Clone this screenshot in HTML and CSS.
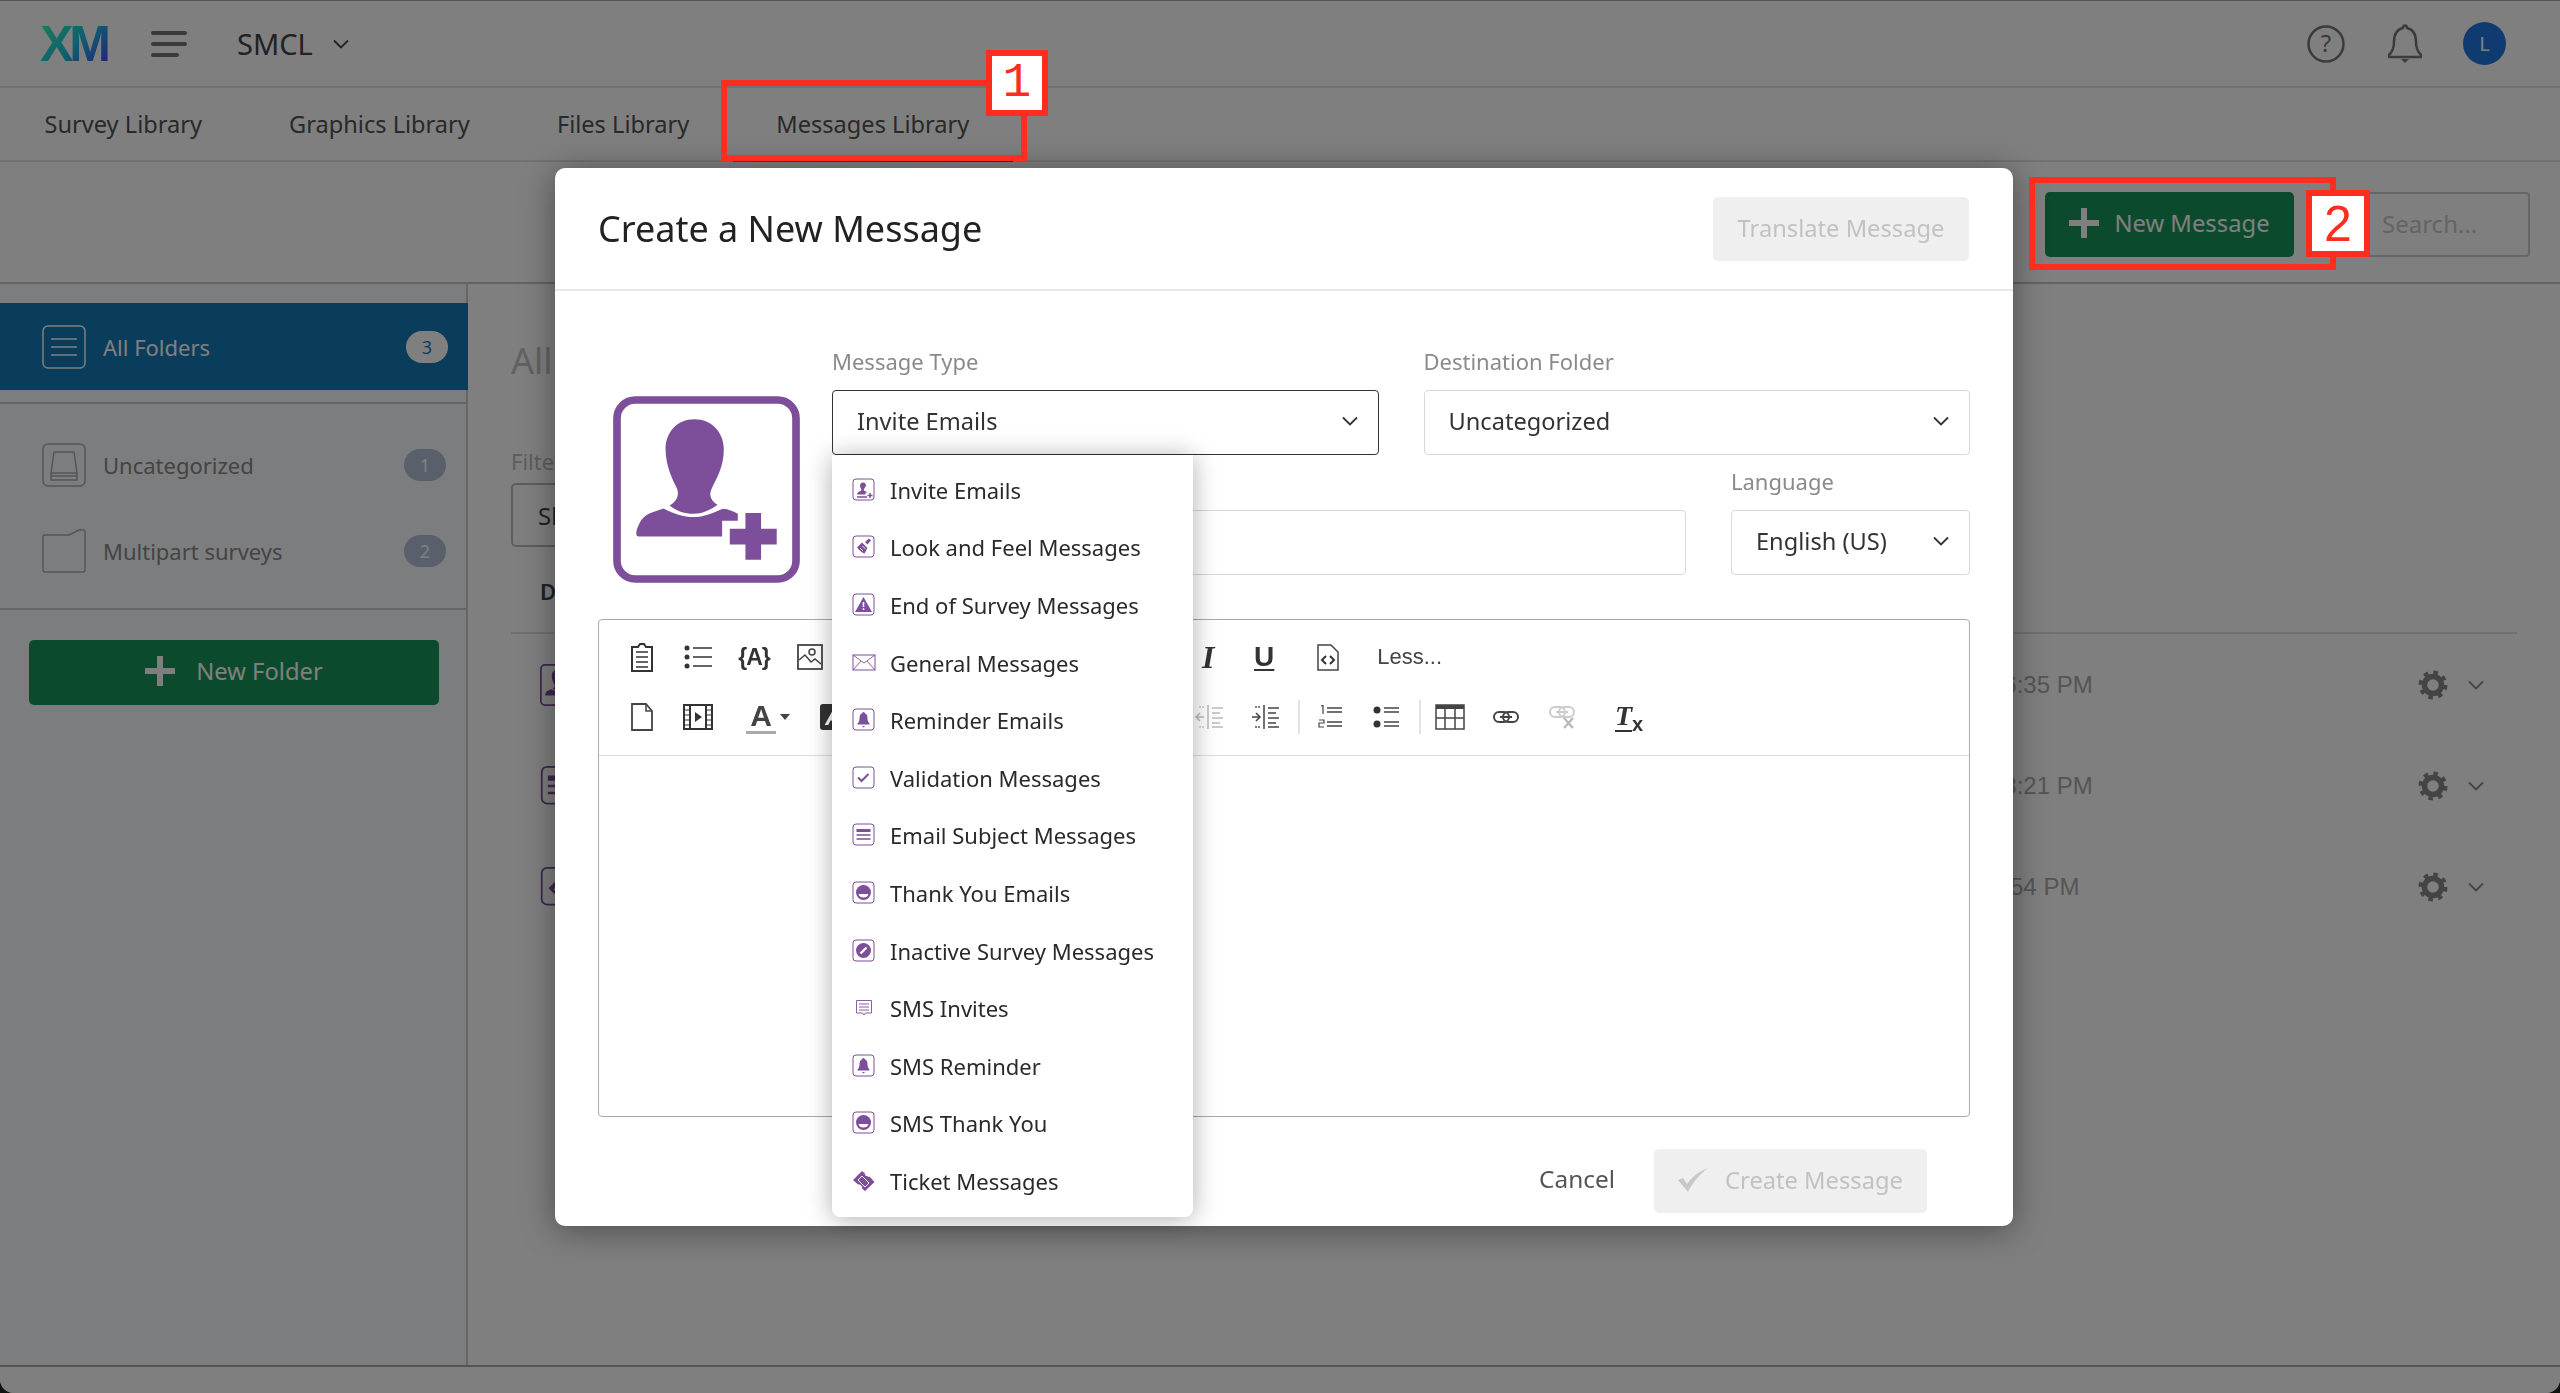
FILE: index.html
```html
<!DOCTYPE html>
<html lang="en">
<head>
<meta charset="utf-8">
<title>Create a New Message</title>
<link rel="stylesheet" href="styles.css">
</head>
<body>
<svg class="defs" aria-hidden="true">
  <symbol id="m-invite" viewBox="0 0 24 24"><rect x="1" y="1" width="21" height="21" rx="3" fill="#fff" stroke="#7d4e99"/><path d="M11 4.500c-2 0-3 1.500-3 3 0 2 1 3 1.400 4 .2.700-.4 1.200-1 1.500-1.500.5-3 1-3.400 3.500h8.500v-2h2c-.5-1-2.500-1.200-3.600-2-.3-.5 0-1 .4-2 .4-1 1.700-2 1.700-3 0-1.500-1-3-3-3z" fill="#7d4e99"/><path d="M5 19h10M18 15v5M15.500 17.500h5" stroke="#7d4e99" stroke-width="1.500" fill="none"/></symbol>
  <symbol id="m-brush" viewBox="0 0 24 24"><rect x="1" y="1" width="21" height="21" rx="3" fill="#fff" stroke="#7d4e99"/><path d="M13 7l4-3.500 2 2-3.500 4z" fill="#7d4e99"/><path d="M10 7.500l5.500 5.500-3 5.500c-2-.5-6-4-7.500-6z" fill="#7d4e99"/><path d="M8 13l3 3M10.500 11l3 3" stroke="#fff" stroke-width=".8"/></symbol>
  <symbol id="m-warn" viewBox="0 0 24 24"><rect x="1" y="1" width="21" height="21" rx="3" fill="#fff" stroke="#7d4e99"/><path d="M11.500 4L20 19H3z" fill="#7d4e99"/><path d="M11.500 9v5M11.500 15.300v1.700" stroke="#fff" stroke-width="1.600"/></symbol>
  <symbol id="m-mail" viewBox="0 0 24 24"><rect x="1" y="4" width="22" height="15" fill="#fff" stroke="#7d4e99"/><path d="M1 4l11 8 11-8M1 19l8-9M23 19l-8-9" fill="none" stroke="#7d4e99" stroke-width=".9"/></symbol>
  <symbol id="m-bell" viewBox="0 0 24 24"><rect x="1" y="1" width="21" height="21" rx="3" fill="#fff" stroke="#7d4e99"/><path d="M11.500 4c-1 0-1.300.8-1.300 1.300C8 6 7.500 8 7.500 10.500c0 2.500-1 4-2 5v1h12v-1c-1-1-2-2.500-2-5 0-2.500-.5-4.500-2.700-5.200 0-.5-.3-1.300-1.300-1.300z" fill="#7d4e99"/><path d="M10 18h3l-1.500 1.500z" fill="#7d4e99"/></symbol>
  <symbol id="m-check" viewBox="0 0 24 24"><rect x="1" y="1" width="21" height="21" rx="3" fill="#fff" stroke="#7d4e99"/><path d="M6 11.500l3.500 3.500 7-7" fill="none" stroke="#7d4e99" stroke-width="2"/></symbol>
  <symbol id="m-subject" viewBox="0 0 24 24"><rect x="1" y="1" width="21" height="21" rx="3" fill="#fff" stroke="#7d4e99"/><path d="M4.500 6h14v3h-14z" fill="#7d4e99"/><path d="M4.500 12h14M4.500 16h14" stroke="#7d4e99" stroke-width="1.300"/></symbol>
  <symbol id="m-thank" viewBox="0 0 24 24"><rect x="1" y="1" width="21" height="21" rx="3" fill="#fff" stroke="#7d4e99"/><circle cx="11.500" cy="11.500" r="7.500" fill="#7d4e99"/><path d="M6.500 13h10c-.5 2.500-2.500 3.500-5 3.500s-4.500-1-5-3.500z" fill="#fff"/></symbol>
  <symbol id="m-inactive" viewBox="0 0 24 24"><rect x="1" y="1" width="21" height="21" rx="3" fill="#fff" stroke="#7d4e99"/><circle cx="11.500" cy="11.500" r="7.500" fill="#7d4e99"/><path d="M8.500 14.500l6-6" stroke="#fff" stroke-width="2.400"/></symbol>
  <symbol id="m-sms" viewBox="0 0 24 24"><path d="M4.500 4.500h15v12.500h-6l-1.500 2-1.500-2h-6z" fill="#fff" stroke="#7d4e99" stroke-width=".9"/><path d="M7 8h10M7 11h10M7 14h10" stroke="#7d4e99" stroke-width=".9"/></symbol>
  <symbol id="m-ticket" viewBox="0 0 24 24"><path d="M1 11l9-9 3 2.500c-.5 1 0 2 1.500 2.500s2 1 3 .5l5 5.500-9.500 9-3-2.500c.5-1.500 0-2.500-1-3s-2-1.500-3-1z" fill="#7d4e99"/><path d="M6 11l4-4 7 7-4 4z" fill="none" stroke="#fff" stroke-width="1"/></symbol>
  <symbol id="big" viewBox="158 108 562 562">
    <rect x="170" y="120" width="538" height="538" rx="55" fill="#fff" stroke="#7d4e99" stroke-width="23"/>
    <path d="M403 178C350 178 316 218 316 268C316 320 340 365 350 385C358 405 350 425 328 437C350 455 375 462 400 462C425 462 450 452 472 435C452 422 445 405 455 385C470 355 491 320 491 268C491 218 455 178 403 178Z" fill="#7d4e99"/>
    <path d="M310 446C280 456 250 462 238 490C230 505 228 515 228 522Q228 530 236 530L486 530L486 483L533 483L533 462C520 455 505 448 488 447C460 460 430 472 400 472C370 472 340 462 310 446Z" fill="#7d4e99"/>
    <path d="M556 460h47v47h47v47h-47v46h-47v-46h-47v-47h47z" fill="#7d4e99"/>
  </symbol>
  <symbol id="plus" viewBox="0 0 30 30"><path d="M12 0h6v12h12v6H18v12h-6V18H0v-6h12z" fill="currentColor"/></symbol>
  <symbol id="chev" viewBox="0 0 16 10"><path d="M1 1.500l7 7 7-7" fill="none" stroke="currentColor" stroke-width="1.800"/></symbol>
  <symbol id="gear" viewBox="0 0 30 30"><circle cx="15" cy="15" r="8.500" fill="none" stroke="#888" stroke-width="5.500"/><circle cx="15" cy="15" r="12.500" fill="none" stroke="#888" stroke-width="4" stroke-dasharray="4.500 5.320"/></symbol>
</svg>

<div class="page">
  <header class="topbar">
    <span class="logo">XM</span>
    <span class="burger"><i></i><i></i><i class="short"></i></span>
    <span class="org">SMCL</span>
    <svg class="org-chev"><use href="#chev"/></svg>
    <span class="top-right">
      <svg class="help" viewBox="0 0 38 38"><circle cx="19" cy="19" r="17.500" fill="none" stroke="#777" stroke-width="2.500"/><text x="19" y="27" text-anchor="middle" class="help-q">?</text></svg>
      <svg class="bell" viewBox="0 0 34 40"><path d="M17 1.500c-1.500 0-2 1.500-2 2.500C8 5.500 6 11 6 18c0 7-2 10-5 13v2h32v-2c-3-3-5-6-5-13 0-7-2-12.500-9-14 0-1-.5-2.500-2-2.500z" fill="none" stroke="#777" stroke-width="2.500"/><path d="M13 35h8l-4 4z" fill="#777"/></svg>
      <span class="avatar">L</span>
    </span>
  </header>

  <nav class="tabs">
    <a class="tab">Survey Library</a>
    <a class="tab">Graphics Library</a>
    <a class="tab">Files Library</a>
    <a class="tab active">Messages Library</a>
  </nav>

  <div class="actions">
    <button class="btn-green new-msg"><svg class="plus"><use href="#plus"/></svg>New Message</button>
    <div class="search">Search...</div>
  </div>

  <div class="content">
    <aside class="sidebar">
      <div class="side-group first">
        <div class="folder selected">
          <svg class="folder-ico" viewBox="0 0 44 44"><rect x="1" y="1" width="42" height="42" rx="5" fill="none" stroke="#fff" stroke-width="1.500"/><path d="M9 14h26M9 22h26M9 30h26" stroke="#fff" stroke-width="1.500"/></svg>
          <span class="folder-name">All Folders</span><span class="badge light">3</span>
        </div>
      </div>
      <div class="side-group">
        <div class="folder">
          <svg class="folder-ico" viewBox="0 0 44 44"><rect x="1" y="1" width="42" height="42" rx="5" fill="none" stroke="#aaa" stroke-width="1.500"/><path d="M12 9h20l3 21H9zM9 30v7h26v-7M9 33h26" fill="none" stroke="#aaa" stroke-width="1.500"/></svg>
          <span class="folder-name">Uncategorized</span><span class="badge">1</span>
        </div>
        <div class="folder">
          <svg class="folder-ico" viewBox="0 0 44 44"><path d="M1 8q0-2 2-2h24l10-5h5q1 0 1 2v38q0 2-2 2H3q-2 0-2-2z" fill="none" stroke="#aaa" stroke-width="1.500"/></svg>
          <span class="folder-name">Multipart surveys</span><span class="badge">2</span>
        </div>
      </div>
      <div class="side-foot">
        <button class="btn-green new-folder"><svg class="plus"><use href="#plus"/></svg>New Folder</button>
      </div>
    </aside>
    <main class="main">
      <h2 class="main-title">All Folders</h2>
      <div class="filter-label">Filter by</div>
      <div class="filter-select">Show All</div>
      <div class="list-head">Description</div>
      <div class="row"><svg class="row-ico"><use href="#big"/></svg><span class="row-time">16:35 PM</span><svg class="gear"><use href="#gear"/></svg><svg class="row-chev"><use href="#chev"/></svg></div>
      <div class="row"><svg class="row-ico"><use href="#m-subject"/></svg><span class="row-time">18:21 PM</span><svg class="gear"><use href="#gear"/></svg><svg class="row-chev"><use href="#chev"/></svg></div>
      <div class="row"><svg class="row-ico"><use href="#m-brush"/></svg><span class="row-time">9:54 PM</span><svg class="gear"><use href="#gear"/></svg><svg class="row-chev"><use href="#chev"/></svg></div>
    </main>
  </div>
  <footer class="pagefoot"></footer>
</div>

<div class="overlay"></div>

<section class="modal">
  <div class="modal-head">
    <h1 class="modal-title">Create a New Message</h1>
    <button class="btn-off translate">Translate Message</button>
  </div>
  <div class="modal-body">
    <div class="form">
      <div class="big-ico-wrap">
        <svg class="big-ico"><use href="#big"/></svg>
      </div>
      <div class="fields">
        <div class="field-row">
          <div class="field grow"><label class="lbl">Message Type</label><div class="select open">Invite Emails<svg class="sel-chev"><use href="#chev"/></svg></div></div>
          <div class="field grow"><label class="lbl">Destination Folder</label><div class="select">Uncategorized<svg class="sel-chev"><use href="#chev"/></svg></div></div>
        </div>
        <div class="field-row second">
          <div class="field grow"><label class="lbl">Message Name</label><div class="select"></div></div>
          <div class="field lang"><label class="lbl">Language</label><div class="select">English (US)<svg class="sel-chev"><use href="#chev"/></svg></div></div>
        </div>
      </div>
    </div>

    <div class="editor">
      <div class="toolbar">
        <div class="tb-row">
          <span class="tb"><svg width="24" height="30" viewBox="0 0 24 30"><path d="M2 5h6l2-3h4l2 3h6v24H2z" fill="none" stroke="#333" stroke-width="2"/><path d="M6 10h12M6 15h12M6 20h12M6 25h12" stroke="#333" stroke-width="1.500"/></svg></span>
          <span class="tb"><svg width="28" height="24" viewBox="0 0 28 24"><circle cx="3" cy="3" r="2.500" fill="#333"/><circle cx="3" cy="12" r="2.500" fill="#333"/><circle cx="3" cy="21" r="2.500" fill="#333"/><path d="M9 3h19M9 12h19M9 21h19" stroke="#333" stroke-width="1.500"/></svg></span>
          <span class="tb glyph-b">{A}</span>
          <span class="tb"><svg width="26" height="26" viewBox="0 0 26 26"><rect x="1" y="1" width="24" height="24" fill="none" stroke="#444" stroke-width="1.800"/><circle cx="15" cy="8" r="3" fill="none" stroke="#444" stroke-width="1.500"/><path d="M2 16l6-5 6 7 4-3 6 5" fill="none" stroke="#444" stroke-width="1.500"/></svg></span>
          <span class="tb-gap"></span>
          <span class="tb glyph-i">I</span>
          <span class="tb glyph-u">U</span>
          <span class="tb code-btn"><svg width="22" height="27" viewBox="0 0 22 27"><path d="M1 1h13l7 7v18H1z" fill="none" stroke="#444" stroke-width="1.500"/><path d="M9 12l-4 4 4 4M13 12l4 4-4 4" fill="none" stroke="#333" stroke-width="2"/></svg></span>
          <span class="less">Less...</span>
        </div>
        <div class="tb-row">
          <span class="tb"><svg width="24" height="28" viewBox="0 0 24 28"><path d="M2 1h14l6 7v19H2z" fill="none" stroke="#444" stroke-width="1.800"/><path d="M16 1v7h6" fill="none" stroke="#444" stroke-width="1.500"/></svg></span>
          <span class="tb"><svg width="30" height="26" viewBox="0 0 30 26"><rect x="1" y="1" width="28" height="24" fill="none" stroke="#333" stroke-width="2"/><path d="M7 1v24M23 1v24" stroke="#333" stroke-width="2"/><path d="M12 8l7 5-7 5z" fill="#333"/><path d="M1 6h6M1 11h6M1 16h6M1 21h6M23 6h6M23 11h6M23 16h6M23 21h6" stroke="#333" stroke-width="1.200"/></svg></span>
          <span class="tb tb-color"><span class="glyph-a">A</span><span class="caret"></span></span>
          <span class="tb tb-bg"><span class="bg-a">A</span></span>
          <span class="tb-gap"></span>
          <span class="tb"><svg width="28" height="26" viewBox="0 0 28 26"><path d="M13 1v24M17 4h11M17 9h8M17 14h11M17 19h8M17 23h11" stroke="#bbb" stroke-width="1.500"/><path d="M9 13H1M5 9l-4 4 4 4" fill="none" stroke="#bbb" stroke-width="1.500"/><path d="M4 3h5M4 23h5" stroke="#ccc" stroke-width="1.500" stroke-dasharray="2 1"/></svg></span>
          <span class="tb"><svg width="28" height="26" viewBox="0 0 28 26"><path d="M13 1v24M17 4h11M17 9h8M17 14h11M17 19h8M17 23h11" stroke="#444" stroke-width="1.500"/><path d="M1 13h8M5 9l4 4-4 4" fill="none" stroke="#444" stroke-width="1.500"/><path d="M4 3h5M4 23h5" stroke="#555" stroke-width="1.500" stroke-dasharray="2 1"/></svg></span>
          <span class="sep sep-a"></span>
          <span class="tb"><svg width="24" height="24" viewBox="0 0 24 24"><path d="M9 3h15M9 7h15M9 17h15M9 21h15" stroke="#444" stroke-width="1.500"/><path d="M3 1l2-.5V9M1 15h5v3H1v4h5" fill="none" stroke="#444" stroke-width="1.200"/></svg></span>
          <span class="tb"><svg width="26" height="24" viewBox="0 0 26 24"><circle cx="4" cy="5" r="3.500" fill="#333"/><circle cx="4" cy="19" r="3.500" fill="#333"/><path d="M11 3h15M11 7h15M11 17h15M11 21h15" stroke="#444" stroke-width="1.500"/></svg></span>
          <span class="sep sep-b"></span>
          <span class="tb"><svg width="30" height="26" viewBox="0 0 30 26"><rect x="1" y="1" width="28" height="24" fill="#fff" stroke="#444" stroke-width="1.500"/><path d="M1 3h28" stroke="#444" stroke-width="4"/><path d="M10 5v20M20 5v20M1 14h28" stroke="#444" stroke-width="1.500"/></svg></span>
          <span class="tb"><svg width="26" height="14" viewBox="0 0 26 14"><rect x="1" y="2" width="15" height="10" rx="5" fill="none" stroke="#444" stroke-width="2"/><rect x="10" y="2" width="15" height="10" rx="5" fill="none" stroke="#444" stroke-width="2"/><path d="M7 7h12" stroke="#444" stroke-width="2"/></svg></span>
          <span class="tb"><svg width="26" height="24" viewBox="0 0 26 24"><rect x="1" y="2" width="15" height="10" rx="5" fill="none" stroke="#ccc" stroke-width="2"/><rect x="10" y="2" width="15" height="10" rx="5" fill="none" stroke="#ccc" stroke-width="2"/><path d="M7 7h12" stroke="#ccc" stroke-width="2"/><path d="M15 13l9 10M24 13l-9 10" stroke="#bbb" stroke-width="2.500"/></svg></span>
          <span class="tb tx"><span class="glyph-t">T</span><span class="glyph-x">x</span></span>
        </div>
      </div>
      <div class="editor-area"></div>
    </div>

    <div class="modal-foot">
      <a class="cancel">Cancel</a>
      <button class="btn-off create"><svg class="check" viewBox="0 0 30 24"><path d="M0 12l5-2 4 6C14 9 20 4 30 0 22 6 15 14 10 24z" fill="#c8c8c8"/></svg>Create Message</button>
    </div>
  </div>

  <ul class="menu">
    <li class="item"><svg class="m-ico"><use href="#m-invite"/></svg>Invite Emails</li>
    <li class="item"><svg class="m-ico"><use href="#m-brush"/></svg>Look and Feel Messages</li>
    <li class="item"><svg class="m-ico"><use href="#m-warn"/></svg>End of Survey Messages</li>
    <li class="item"><svg class="m-ico"><use href="#m-mail"/></svg>General Messages</li>
    <li class="item"><svg class="m-ico"><use href="#m-bell"/></svg>Reminder Emails</li>
    <li class="item"><svg class="m-ico"><use href="#m-check"/></svg>Validation Messages</li>
    <li class="item"><svg class="m-ico"><use href="#m-subject"/></svg>Email Subject Messages</li>
    <li class="item"><svg class="m-ico"><use href="#m-thank"/></svg>Thank You Emails</li>
    <li class="item"><svg class="m-ico"><use href="#m-inactive"/></svg>Inactive Survey Messages</li>
    <li class="item"><svg class="m-ico"><use href="#m-sms"/></svg>SMS Invites</li>
    <li class="item"><svg class="m-ico"><use href="#m-bell"/></svg>SMS Reminder</li>
    <li class="item"><svg class="m-ico"><use href="#m-thank"/></svg>SMS Thank You</li>
    <li class="item"><svg class="m-ico"><use href="#m-ticket"/></svg>Ticket Messages</li>
  </ul>
</section>

<div class="mark box-one"></div>
<div class="tag tag-one">1</div>
<div class="mark box-two"></div>
<div class="tag tag-two">2</div>
</body>
</html>
```

FILE: styles.css
```css
* { box-sizing: border-box; }
html, body { margin: 0; height: 100%; }
body {
  background: #1a2a1c;
  font-family: "Noto Sans", "Open Sans", sans-serif;
  color: #525252;
  overflow: hidden;
}
.defs { display: none; }

.page {
  height: 1393px;
  display: flex;
  flex-direction: column;
  background: #fff;
  border-top: 1px solid #aaa;
  border-radius: 0 0 14px 14px;
  overflow: hidden;
}

/* top bar */
.topbar {
  height: 87px;
  flex: none;
  display: flex;
  align-items: center;
  padding-left: 40px;
  border-bottom: 2px solid #e4e4e4;
}
.logo {
  width: 72px;
  font: bold 50px/50px "Liberation Sans", sans-serif;
  letter-spacing: -4px;
  background: linear-gradient(135deg, #3cffb0 0%, #1cc0e0 50%, #5030ff 100%);
  -webkit-background-clip: text;
  background-clip: text;
  color: transparent;
}
.burger { display: flex; flex-direction: column; gap: 7px; width: 36px; margin-left: 39px; }
.burger i { display: block; height: 4px; width: 36px; border-radius: 2px; background: #747474; }
.burger i.short { width: 28px; }
.org { margin-left: 50px; font-size: 29px; color: #444; }
.org-chev { width: 16px; height: 10px; margin-left: 20px; color: #444; }
.top-right { margin-left: auto; display: flex; align-items: center; padding-right: 54px; }
.help { width: 38px; height: 38px; }
.help-q { font: 24px "Noto Sans", sans-serif; fill: #777; }
.bell { width: 34px; height: 40px; margin-left: 43px; }
.avatar {
  width: 43px; height: 43px; margin-left: 41px; border-radius: 50%;
  background: #1e76e0; color: #fff; font-size: 20px;
  display: flex; align-items: center; justify-content: center;
}

/* tabs */
.tabs { height: 74px; flex: none; display: flex; padding-left: 1px; border-bottom: 2px solid #e4e4e4; }
.tab {
  padding: 0 43.5px;
  font-size: 23.6px;
  color: #525252;
  display: flex;
  align-items: center;
  position: relative;
}
.tab.active::after {
  content: "";
  position: absolute;
  left: 0; right: 0; bottom: -2px;
  height: 4px;
  background: linear-gradient(90deg, #20c0a0, #3040ff);
}

/* action bar */
.actions {
  height: 122px;
  flex: none;
  display: flex;
  justify-content: flex-end;
  padding: 30px 30px 0 0;
  border-bottom: 2px solid #c8c8c8;
}
.btn-green {
  border: 0;
  border-radius: 5px;
  background: #18955a;
  color: #fff;
  font: 23.8px "Noto Sans", sans-serif;
  padding: 0 0 3px;
  display: flex;
  align-items: center;
  justify-content: center;
}
.plus { width: 30px; height: 30px; color: #fff; margin-right: 15px; }
.new-msg { width: 249px; height: 65px; }
.search {
  margin-left: 20px;
  width: 216px; height: 65px;
  border: 2px solid #ccc; border-radius: 4px;
  padding: 0 0 3px 66px;
  font-size: 24px; color: #c8c8c8;
  display: flex; align-items: center;
}

/* content */
.content { flex: 1; display: flex; min-height: 0; background: #fff; }
.sidebar {
  width: 468px; flex: none;
  background: #f9fafc;
  border-right: 2px solid #ccc;
}
.side-group { padding: 18px 0 14px; border-bottom: 2px solid #ccc; }
.side-group.first { padding: 19px 0 12px; }
.folder {
  height: 86px;
  padding: 0 20px 0 42px;
  display: flex;
  align-items: center;
  color: #888;
  font-size: 22px;
}
.folder.selected { height: 87px; background: #1478b8; color: #fff; margin-right: -2px; }
.folder-ico { width: 44px; height: 44px; flex: none; }
.folder-name { margin-left: 17px; flex: 1; }
.badge {
  width: 42px; height: 32px; border-radius: 16px;
  background: #b4c0d6; color: #fff;
  font-size: 18px;
  display: flex; align-items: center; justify-content: center;
}
.badge.light { background: #fff; color: #1478b8; }
.side-foot { padding: 30px 29px; }
.new-folder { width: 410px; height: 65px; }
.new-folder .plus { margin-right: 21px; }

/* main behind */
.main { flex: 1; padding: 0 43px; min-width: 0; }
.main-title { margin: 55px 0 0; font-size: 36px; line-height: 44px; font-weight: 400; color: #c4c4c4; }
.filter-label { margin-top: 62px; font-size: 22px; line-height: 32px; color: #bbb; }
.filter-select {
  margin-top: 6px; width: 300px; height: 64px;
  border: 2px solid #bbb; border-radius: 5px;
  padding-left: 25px; font-size: 24px; color: #444;
  display: flex; align-items: center;
}
.list-head {
  padding: 29px 0 0 29px; height: 87px;
  font-size: 22px; font-weight: 600; color: #444;
  border-bottom: 2px solid #e0e0e0;
}
.row { height: 101px; padding-left: 29px; display: flex; align-items: center; }
.row-ico { width: 42px; height: 42px; }
.row-time { margin-left: auto; width: 120px; font: 24px "Liberation Sans", sans-serif; color: #aaa; }
.gear { width: 30px; height: 30px; margin-left: 308px; }
.row-chev { width: 16px; height: 10px; margin: 0 33px 0 20px; color: #888; }

.pagefoot { height: 28px; flex: none; background: #fff; border-top: 2px solid #aaa; }

.overlay { position: fixed; inset: 0; background: rgba(0, 0, 0, .5); }

/* modal */
.modal {
  position: absolute;
  left: 555px; top: 168px;
  width: 1458px; height: 1058px;
  background: #fff;
  border-radius: 10px;
  box-shadow: 0 4px 34px rgba(0, 0, 0, .4);
  display: flex;
  flex-direction: column;
}
.modal-head {
  height: 123px;
  flex: none;
  padding: 29px 44px 0 43px;
  display: flex;
  justify-content: space-between;
  align-items: flex-start;
  border-bottom: 2px solid #e8e8e8;
}
.modal-title { margin: 0; font-size: 36px; line-height: 64px; font-weight: 400; color: #222; }
.btn-off {
  border: 0;
  border-radius: 5px;
  background: #efefef;
  color: #c2c2c2;
  font: 23.7px "Noto Sans", sans-serif;
  padding: 0 0 3px;
  display: flex;
  align-items: center;
  justify-content: center;
}
.translate { width: 256px; height: 64px; }
.modal-body { padding: 56px 43px 0; flex: 1; }
.form { display: flex; }
.big-ico-wrap { width: 234px; flex: none; padding: 49px 0 0 15px; }
.big-ico { width: 187px; height: 187px; display: block; }
.fields { flex: 1; }
.field-row { display: flex; gap: 45px; }
.field-row.second { margin-top: 12px; }
.field { display: flex; flex-direction: column; }
.grow { flex: 1; }
.lang { width: 239px; flex: none; }
.lbl { font-size: 22px; line-height: 28px; color: #8a8a8a; margin-bottom: 15px; }
.select {
  height: 65px;
  border: 1px solid #d8d8d8;
  border-radius: 4px;
  padding: 0 20px 3px 24px;
  display: flex;
  align-items: center;
  justify-content: space-between;
  font-size: 23.6px;
  color: #333;
}
.select.open { border-color: #333; }
.sel-chev { width: 16px; height: 10px; color: #333; }

.editor {
  margin-top: 36px;
  height: 498px;
  border: 1px solid #aaa;
  border-radius: 4px;
}
.toolbar { height: 136px; padding-top: 7px; border-bottom: 1px solid #ddd; }
.tb-row { height: 60px; display: flex; align-items: center; padding-left: 15px; }
.tb { width: 56px; flex: none; display: flex; align-items: center; justify-content: center; color: #333; }
.tb-gap { flex: 1; }
.tb-row:last-child .tb-gap { flex: none; width: 319px; }
.glyph-b { font: bold 23px "Liberation Sans", sans-serif; letter-spacing: -1px; }
.glyph-i { font: italic bold 32px "Liberation Serif", serif; }
.glyph-u { font: bold 28px "Liberation Sans", sans-serif; text-decoration: underline; text-underline-offset: 3px; }
.code-btn { margin-left: 8px; }
.less { font: 22px "Liberation Sans", sans-serif; color: #444; margin: 0 527px 0 21px; }
.tb-color { margin-left: 14px; }
.glyph-a { font: bold 30px/30px "Liberation Sans", sans-serif; color: #444; border-bottom: 3px solid #aaa; padding: 0 4px; }
.caret { border: 5px solid transparent; border-top: 6px solid #444; border-bottom: 0; margin-left: 4px; }
.tb-bg { margin-left: 10px; }
.bg-a { width: 28px; height: 26px; border-radius: 3px; background: #333; color: #fff; font: italic bold 24px/26px "Liberation Sans", sans-serif; text-align: center; }
.sep { width: 2px; height: 34px; background: #e2e2e2; flex: none; }
.sep-a { margin: 0 2px 0 5px; }
.sep-b { margin: 0 1px 0 5px; }
.tx { margin-left: 11px; align-items: flex-end; }
.glyph-t { font: italic bold 28px/28px "Liberation Serif", serif; border-bottom: 2px solid #333; }
.glyph-x { font: bold 20px/16px "Liberation Sans", sans-serif; }

.modal-foot { margin-top: 32px; padding-right: 43px; display: flex; justify-content: flex-end; align-items: center; gap: 39px; }
.cancel { font-size: 24.4px; color: #555; padding-bottom: 5px; }
.create { width: 273px; height: 64px; }
.check { width: 30px; height: 24px; margin-right: 17px; }

/* dropdown */
.menu {
  position: absolute;
  left: 277px; top: 287px;
  width: 361px; height: 762px;
  margin: 0;
  padding: 7px 0;
  list-style: none;
  background: #fff;
  border-radius: 0 0 8px 8px;
  box-shadow: 0 2px 26px rgba(0, 0, 0, .32);
}
.item {
  height: 57.6px;
  padding: 0 0 2px 20px;
  display: flex;
  align-items: center;
  font-size: 22px;
  color: #2a2a2a;
}
.m-ico { width: 24px; height: 24px; margin-right: 14px; flex: none; }

/* annotations */
.mark { position: absolute; border: 6px solid #ff2d20; }
.box-one { left: 721px; top: 80px; width: 306px; height: 81px; }
.box-two { left: 2029px; top: 177px; width: 307px; height: 93px; }
.tag {
  position: absolute;
  background: #fff;
  border: 6px solid #ff2d20;
  color: #ff2d20;
  display: flex;
  align-items: center;
  justify-content: center;
}
.tag-one { left: 986px; top: 50px; width: 62px; height: 66px; font: 48px "Liberation Mono", monospace; }
.tag-two { left: 2306px; top: 190px; width: 64px; height: 67px; font: 50px "Liberation Sans", sans-serif; }
```
